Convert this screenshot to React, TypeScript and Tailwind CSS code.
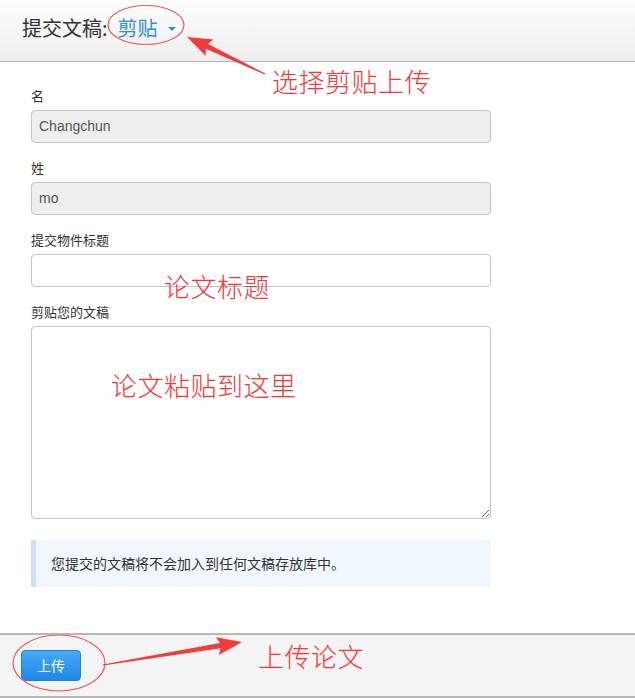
import React from "react";

const CJK = { fontFamily: '"Noto Sans CJK SC", "Liberation Sans", sans-serif' };
const LAT = { fontFamily: '"Liberation Sans", "Noto Sans CJK SC", sans-serif' };

function arrowPoints(x1: number, y1: number, x2: number, y2: number, s0 = 0.6, s1 = 2.6, headLen = 22, hw = 9) {
  const dx = x2 - x1, dy = y2 - y1;
  const L = Math.hypot(dx, dy);
  const ux = dx / L, uy = dy / L;
  const nx = -uy, ny = ux;
  const bx = x2 - ux * headLen, by = y2 - uy * headLen;
  const wx = bx - ux * 3, wy = by - uy * 3;
  const pts = [
    [x1 + nx * s0, y1 + ny * s0],
    [bx + nx * s1, by + ny * s1],
    [wx + nx * hw, wy + ny * hw],
    [x2, y2],
    [wx - nx * hw, wy - ny * hw],
    [bx - nx * s1, by - ny * s1],
    [x1 - nx * s0, y1 - ny * s0],
  ];
  return pts.map((p) => p.map((v) => v.toFixed(1)).join(",")).join(" ");
}

function Label({ children }: { children: React.ReactNode }) {
  return (
    <div className="h-[18px] mb-[5px] text-[13px] leading-[18px] text-[#333]" style={CJK}>
      {children}
    </div>
  );
}

export default function App() {
  return (
    <div className="relative w-[635px] h-[698px] overflow-hidden bg-white flex flex-col">
      {/* Header */}
      <div className="h-[62px] shrink-0 border-b border-[#b3b3b3] bg-gradient-to-b from-[#fdfdfd] to-[#eeeeee] pl-[22px] pt-[14px]">
        <div className="flex items-center h-[28px] text-[20px] leading-[28px]" style={CJK}>
          <span className="text-[#333]">提交文稿:</span>
          <span className="ml-[10px] text-[#2a8fe6]">剪贴</span>
          <span className="ml-[10px] mt-[1px] w-0 h-0 border-l-[4px] border-r-[4px] border-t-[4px] border-l-transparent border-r-transparent border-t-[#2a8fe6]" />
        </div>
      </div>

      {/* Main form */}
      <div className="h-[571px] shrink-0 px-[31px] pt-[25px] bg-white">
        <div className="w-[460px] flex flex-col">
          <Label>名</Label>
          <div
            className="h-[33px] rounded-[4px] border border-[#c4c4c4] bg-[#eeeeee] px-[7px] flex items-center text-[14px] text-[#555]"
            style={LAT}
          >
            Changchun
          </div>
          <div className="h-[16px]" />
          <Label>姓</Label>
          <div
            className="h-[33px] rounded-[4px] border border-[#c4c4c4] bg-[#eeeeee] px-[7px] flex items-center text-[14px] text-[#555]"
            style={LAT}
          >
            mo
          </div>
          <div className="h-[16px]" />
          <Label>提交物件标题</Label>
          <input
            className="h-[33px] rounded-[4px] border border-[#c4c4c4] bg-white px-[7px] outline-none"
            style={LAT}
          />
          <div className="h-[16px]" />
          <Label>剪贴您的文稿</Label>
          <textarea
            className="block h-[193px] rounded-[4px] border border-[#c4c4c4] bg-white px-[7px] outline-none resize-y"
            style={LAT}
          />
          <div className="h-[21px]" />
          <div
            className="h-[47px] border-l-[5px] border-[#cfe2f4] bg-[#f0f7fe] pl-[15px] flex items-center text-[14px] text-[#333]"
            style={CJK}
          >
            您提交的文稿将不会加入到任何文稿存放库中。
          </div>
        </div>
      </div>

      {/* Footer */}
      <div className="flex-1 border-t-2 border-b-2 border-[#b8b8b8] bg-[#f4f4f4] pl-[21px] pt-[15px]">
        <button
          className="w-[60px] h-[31px] rounded-[4px] border border-[#1f80d8] bg-gradient-to-b from-[#47aaf7] to-[#1b87ea] text-white text-[14px] flex items-center justify-center"
          style={CJK}
        >
          上传
        </button>
      </div>

      {/* Annotations overlay */}
      <svg className="absolute left-0 top-0 pointer-events-none" width="635" height="698" viewBox="0 0 635 698">
        <ellipse cx="146" cy="25" rx="38" ry="19.5" fill="none" stroke="#ee5a5a" strokeWidth="1.2" />
        <polygon points={arrowPoints(265, 74, 187, 37)} fill="#f23c3c" />
        <ellipse cx="59" cy="663" rx="46" ry="28" fill="none" stroke="#ee5a5a" strokeWidth="1.2" />
        <polygon points={arrowPoints(103, 665, 242, 642)} fill="#f23c3c" />
      </svg>
      <span className="absolute left-[272px] top-[68px] text-[26px] font-light tracking-[0.5px] leading-none text-[#ff3333] whitespace-nowrap" style={CJK}>
        选择剪贴上传
      </span>
      <span className="absolute left-[164px] top-[273px] text-[26px] font-light tracking-[0.5px] leading-none text-[#ff3333] whitespace-nowrap" style={CJK}>
        论文标题
      </span>
      <span className="absolute left-[111px] top-[372px] text-[26px] font-light tracking-[0.5px] leading-none text-[#ff3333] whitespace-nowrap" style={CJK}>
        论文粘贴到这里
      </span>
      <span className="absolute left-[258px] top-[643px] text-[26px] font-light tracking-[0.5px] leading-none text-[#ff3333] whitespace-nowrap" style={CJK}>
        上传论文
      </span>
    </div>
  );
}
